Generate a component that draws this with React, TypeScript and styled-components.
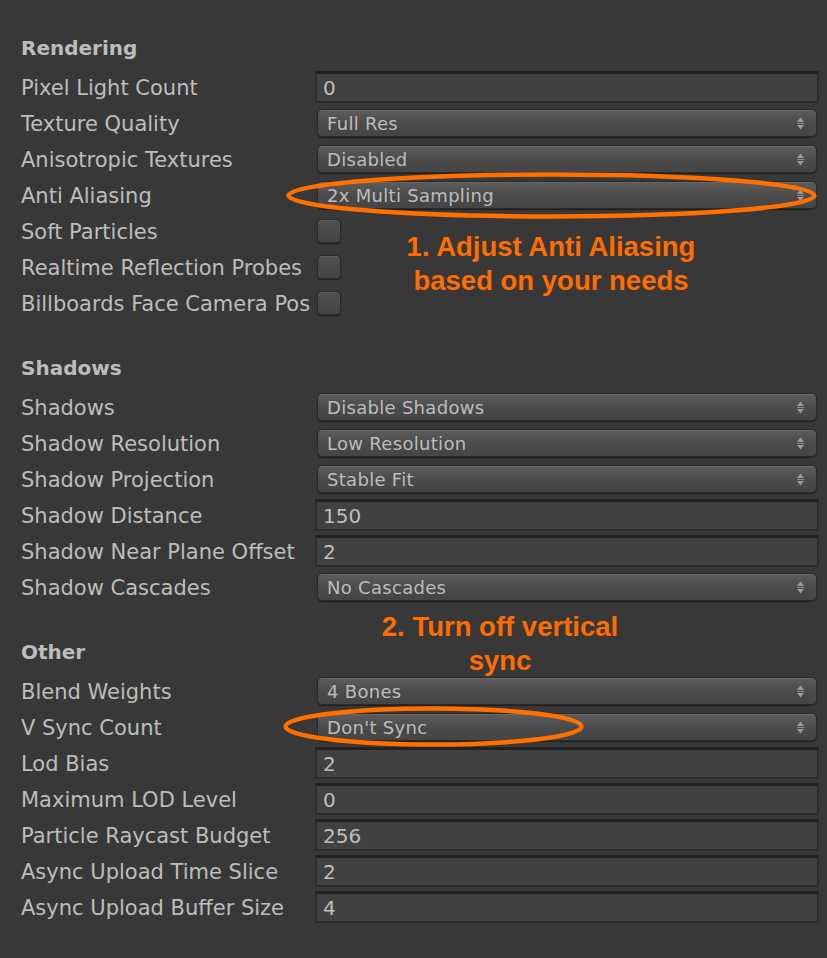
import React from 'react';
import styled, { createGlobalStyle } from 'styled-components';

const GlobalStyle = createGlobalStyle`
  html, body { margin: 0; padding: 0; background: #383838; }
  body { font-family: "DejaVu Sans", "Noto Sans", sans-serif; }
`;

const Panel = styled.div`
  position: relative;
  width: 827px;
  height: 958px;
  box-sizing: border-box;
  padding: 29px 8px 0 21px;
  background: #383838;
  display: flex;
  flex-direction: column;
  gap: 28px;
  overflow: hidden;
`;

const Section = styled.section`
  display: flex;
  flex-direction: column;
`;

const Header = styled.div`
  height: 36px;
  margin-bottom: 4px;
  padding-top: 1px;
  box-sizing: border-box;
  display: flex;
  align-items: center;
  font-size: 20px;
  font-weight: bold;
  color: #bdbdbd;
`;

const Row = styled.div`
  height: 36px;
  display: grid;
  grid-template-columns: 294px 1fr;
  align-items: center;
`;

const Label = styled.span`
  font-size: 21px;
  padding-top: 2px;
  color: #bdbdbd;
  white-space: nowrap;
`;

const Field = styled.div`
  height: 32px;
  box-sizing: border-box;
  border: 2px solid #2c2c2c;
  border-top: 3px solid #222222;
  background: #414141;
  padding-left: 6px;
  display: flex;
  align-items: center;
  font-size: 20px;
  color: #bebebe;
`;

const Dropdown = styled.div`
  height: 28px;
  margin: 0 2px;
  box-sizing: border-box;
  border: 1px solid #2a2a2a;
  border-radius: 5px;
  background: linear-gradient(#5c5c5c, #4a4a4a 55%, #454545);
  box-shadow: inset 0 1px 0 rgba(255, 255, 255, 0.08), 0 1px 1px rgba(0, 0, 0, 0.45);
  padding: 0 11px 0 9px;
  display: flex;
  align-items: center;
  justify-content: space-between;
  font-size: 18px;
  letter-spacing: 0.3px;
  color: #bdbdbd;
`;

const Checkbox = styled.div`
  width: 24px;
  height: 24px;
  margin-left: 2px;
  box-sizing: border-box;
  border: 1px solid #2a2a2a;
  border-radius: 4px;
  background: linear-gradient(#505050, #444444);
  box-shadow: inset 0 1px 0 rgba(255, 255, 255, 0.07), 0 1px 1px rgba(0, 0, 0, 0.45);
`;

const Note = styled.div<{ $left: number; $top: number; $width: number }>`
  position: absolute;
  left: ${(p) => p.$left}px;
  top: ${(p) => p.$top}px;
  width: ${(p) => p.$width}px;
  text-align: center;
  font-family: "Liberation Sans", Arial, sans-serif;
  font-weight: bold;
  font-size: 27.5px;
  line-height: 34px;
  color: #ff6c00;
  pointer-events: none;
`;

const Ring = styled.svg<{ $left: number; $top: number }>`
  position: absolute;
  left: ${(p) => p.$left}px;
  top: ${(p) => p.$top}px;
  overflow: visible;
  pointer-events: none;
`;

const Arrows = () => (
  <svg width="9" height="13" viewBox="0 0 9 13">
    <path d="M4.5 0.5 L8 5 H1 Z" fill="#9a9a9a" />
    <rect x="1" y="6" width="7" height="1" fill="#8a8a8a" />
    <path d="M1 8 H8 L4.5 12.5 Z" fill="#9a9a9a" />
  </svg>
);

type Item =
  | { label: string; kind: 'field'; value: string }
  | { label: string; kind: 'select'; value: string }
  | { label: string; kind: 'check' };

const sections: { title: string; items: Item[] }[] = [
  {
    title: 'Rendering',
    items: [
      { label: 'Pixel Light Count', kind: 'field', value: '0' },
      { label: 'Texture Quality', kind: 'select', value: 'Full Res' },
      { label: 'Anisotropic Textures', kind: 'select', value: 'Disabled' },
      { label: 'Anti Aliasing', kind: 'select', value: '2x Multi Sampling' },
      { label: 'Soft Particles', kind: 'check' },
      { label: 'Realtime Reflection Probes', kind: 'check' },
      { label: 'Billboards Face Camera Pos', kind: 'check' },
    ],
  },
  {
    title: 'Shadows',
    items: [
      { label: 'Shadows', kind: 'select', value: 'Disable Shadows' },
      { label: 'Shadow Resolution', kind: 'select', value: 'Low Resolution' },
      { label: 'Shadow Projection', kind: 'select', value: 'Stable Fit' },
      { label: 'Shadow Distance', kind: 'field', value: '150' },
      { label: 'Shadow Near Plane Offset', kind: 'field', value: '2' },
      { label: 'Shadow Cascades', kind: 'select', value: 'No Cascades' },
    ],
  },
  {
    title: 'Other',
    items: [
      { label: 'Blend Weights', kind: 'select', value: '4 Bones' },
      { label: 'V Sync Count', kind: 'select', value: "Don't Sync" },
      { label: 'Lod Bias', kind: 'field', value: '2' },
      { label: 'Maximum LOD Level', kind: 'field', value: '0' },
      { label: 'Particle Raycast Budget', kind: 'field', value: '256' },
      { label: 'Async Upload Time Slice', kind: 'field', value: '2' },
      { label: 'Async Upload Buffer Size', kind: 'field', value: '4' },
    ],
  },
];

const Control = ({ item }: { item: Item }) => {
  if (item.kind === 'field') return <Field>{item.value}</Field>;
  if (item.kind === 'select')
    return (
      <Dropdown>
        <span>{item.value}</span>
        <Arrows />
      </Dropdown>
    );
  return <Checkbox />;
};

export default function App() {
  return (
    <>
      <GlobalStyle />
      <Panel>
        {sections.map((s) => (
          <Section key={s.title}>
            <Header>{s.title}</Header>
            {s.items.map((it) => (
              <Row key={it.label}>
                <Label>{it.label}</Label>
                <Control item={it} />
              </Row>
            ))}
          </Section>
        ))}

        <Ring $left={286} $top={172} width={531} height={47}>
          <ellipse cx={265.5} cy={23.5} rx={263} ry={21} fill="none" stroke="#ff7000" strokeWidth={4.5} />
        </Ring>
        <Ring $left={283} $top={706} width={301} height={41}>
          <ellipse cx={150.5} cy={20.5} rx={148} ry={18} fill="none" stroke="#ff7000" strokeWidth={4.5} />
        </Ring>

        <Note $left={351} $top={230} $width={400}>
          1. Adjust Anti Aliasing
          <br />
          based on your needs
        </Note>
        <Note $left={350} $top={610} $width={300}>
          2. Turn off vertical
          <br />
          sync
        </Note>
      </Panel>
    </>
  );
}
